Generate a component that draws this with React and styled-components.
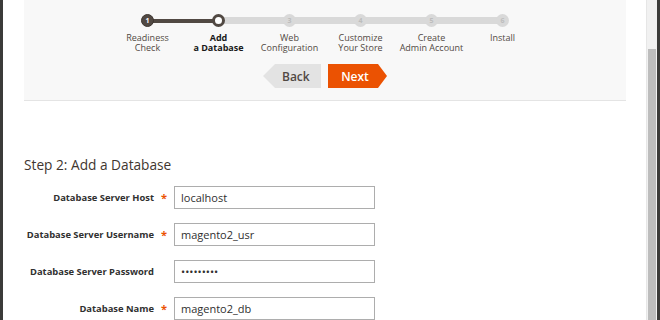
import React from 'react';
import styled, { createGlobalStyle } from 'styled-components';

const GlobalStyle = createGlobalStyle`
    html, body {
        margin: 0;
        padding: 0;
        background: #fff;
        font-family: "Open Sans", "Liberation Sans", sans-serif;
    }
`;

const steps = [
    { n: 1, label: ['Readiness', 'Check'], state: 'done' },
    { n: 2, label: ['Add', 'a Database'], state: 'active' },
    { n: 3, label: ['Web', 'Configuration'], state: 'todo' },
    { n: 4, label: ['Customize', 'Your Store'], state: 'todo' },
    { n: 5, label: ['Create', 'Admin Account'], state: 'todo' },
    { n: 6, label: ['Install'], state: 'todo' },
];

const fields = [
    { label: 'Database Server Host', value: 'localhost', required: true },
    { label: 'Database Server Username', value: 'magento2_usr', required: true },
    { label: 'Database Server Password', value: 'magento2', required: false, password: true },
    { label: 'Database Name', value: 'magento2_db', required: true },
];

const App = () => {
  return (
    <>
        <GlobalStyle />
        <Frame>
            <Edge />
            <Content>
                <Panel>
                    <Stepper>
                        {steps.map((s) => (
                            <Step key={s.n} $state={s.state} $first={s.n === 1}>
                                <Dot $state={s.state}>{s.state === 'active' ? '' : s.n}</Dot>
                                <StepLabel $state={s.state}>
                                    {s.label[0]}
                                    {s.label[1] && <br />}
                                    {s.label[1]}
                                </StepLabel>
                            </Step>
                        ))}
                    </Stepper>
                    <Nav>
                        <BackBtn>Back</BackBtn>
                        <NextBtn>Next</NextBtn>
                    </Nav>
                </Panel>
                <Heading>Step 2: Add a Database</Heading>
                <Form>
                    {fields.map((f) => (
                        <Row key={f.label}>
                            <Label>{f.label}</Label>
                            <Required>{f.required ? '*' : ''}</Required>
                            <Input type={f.password ? 'password' : 'text'} defaultValue={f.password ? '123456789' : f.value} readOnly />
                        </Row>
                    ))}
                </Form>
            </Content>
            <Track>
                <Thumb />
            </Track>
            <Edge />
        </Frame>
    </>
  )
}

const Frame = styled.div`
    display: flex;
    width: 660px;
    height: 320px;
    overflow: hidden;
`;

const Edge = styled.div`
    width: 3px;
    flex: none;
    background-color: #3b3b39;
`;

const Content = styled.div`
    flex: 1;
    padding: 0 20px 0 21px;
    display: flex;
    flex-direction: column;
`;

const Panel = styled.div`
    background-color: #f8f8f8;
    border-bottom: 1px solid #e4e4e4;
    box-sizing: border-box;
    height: 102px;
    padding-top: 14px;
`;

const Stepper = styled.div`
    display: flex;
    justify-content: center;
`;

const Step = styled.div`
    position: relative;
    width: 71px;
    display: flex;
    flex-direction: column;
    align-items: center;

    &::before {
        content: '';
        display: ${(p) => (p.$first ? 'none' : 'block')};
        position: absolute;
        left: -50%;
        right: 50%;
        top: ${(p) => (p.$state === 'todo' ? '3px' : '5px')};
        height: ${(p) => (p.$state === 'todo' ? '7px' : '4px')};
        background-color: ${(p) => (p.$state === 'todo' ? '#d9d9d9' : '#514943')};
    }
`;

const Dot = styled.div`
    position: relative;
    z-index: 1;
    box-sizing: border-box;
    width: 13px;
    height: 13px;
    border-radius: 50%;
    display: flex;
    align-items: center;
    justify-content: center;
    font-size: 7px;
    font-weight: 700;
    line-height: 1;
    color: ${(p) => (p.$state === 'done' ? '#fff' : '#bdbdbd')};
    background-color: ${(p) => (p.$state === 'done' ? '#514943' : p.$state === 'active' ? '#fff' : '#d9d9d9')};
    border: ${(p) => (p.$state === 'active' ? '3px solid #514943' : p.$state === 'done' ? '1px solid #3d3530' : 'none')};
`;

const StepLabel = styled.div`
    margin-top: 6px;
    text-align: center;
    font-size: 9px;
    line-height: 10px;
    color: ${(p) => (p.$state === 'active' ? '#1a1a1a' : '#514943')};
    font-weight: ${(p) => (p.$state === 'active' ? 700 : 400)};
    white-space: nowrap;
`;

const Nav = styled.div`
    display: flex;
    justify-content: center;
    gap: 7px;
    margin-top: 11px;
`;

const BackBtn = styled.button`
    border: none;
    height: 24px;
    width: 58px;
    padding: 0 13px 0 19px;
    background-color: #e3e3e3;
    color: #514943;
    font-family: "Open Sans", "Liberation Sans", sans-serif;
    font-size: 12px;
    font-weight: 600;
    clip-path: polygon(12px 0, 100% 0, 100% 100%, 12px 100%, 0 50%);
`;

const NextBtn = styled.button`
    border: none;
    height: 24px;
    width: 59px;
    padding: 0 17px 0 12px;
    background-color: #eb5202;
    color: #fff;
    font-family: "Open Sans", "Liberation Sans", sans-serif;
    font-size: 12px;
    font-weight: 600;
    clip-path: polygon(0 0, calc(100% - 9px) 0, 100% 50%, calc(100% - 9px) 100%, 0 100%);
`;

const Heading = styled.h2`
    margin: 54px 0 0;
    font-size: 13.7px;
    line-height: 20px;
    font-weight: 400;
    color: #41362f;
`;

const Form = styled.div`
    display: flex;
    flex-direction: column;
    gap: 14px;
    margin-top: 11px;
`;

const Row = styled.div`
    display: grid;
    grid-template-columns: 130px 20px 201px;
    align-items: center;
`;

const Label = styled.label`
    text-align: right;
    font-size: 9.4px;
    font-weight: 700;
    color: #303030;
    white-space: nowrap;
`;

const Required = styled.span`
    text-align: center;
    color: #eb5202;
    font-size: 11px;
    font-weight: 700;
`;

const Input = styled.input`
    box-sizing: border-box;
    width: 201px;
    height: 23px;
    margin: 0;
    border: 1px solid #adadad;
    padding: 0 6px;
    font-family: "Open Sans", "Liberation Sans", sans-serif;
    font-size: 11px;
    color: #303030;
    outline: none;
`;

const Track = styled.div`
    width: 11px;
    flex: none;
    background-color: #f1f1f1;
    border-left: 1px solid #e6e6e6;
    box-sizing: border-box;
    display: flex;
    flex-direction: column;
    padding: 49px 1px 0 1px;
`;

const Thumb = styled.div`
    flex: 1;
    background-color: #bdbdbd;
`;

export default App
